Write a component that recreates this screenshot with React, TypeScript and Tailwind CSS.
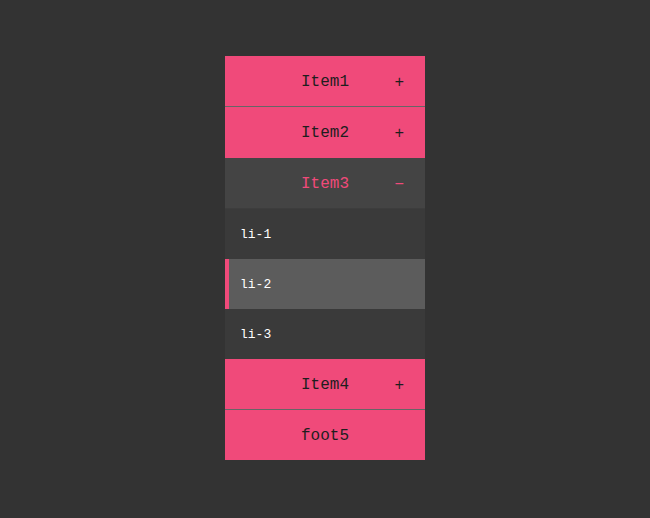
import React, { useState } from "react";

const items = ["Item1", "Item2", "Item3", "Item4"];
const subs = ["li-1", "li-2", "li-3"];

export default function App() {
  const [open, setOpen] = useState("Item3");
  const [active, setActive] = useState("li-2");

  return (
    <div className="min-h-[518px] bg-[#333333] pt-[56px] font-['Liberation_Mono',monospace]">
      <div className="mx-auto w-[200px]">
        {items.map((item, i) => {
          const isOpen = open === item;
          return (
            <div key={item}>
              <button
                onClick={() => setOpen(isOpen ? "" : item)}
                className={`relative box-content flex h-[50px] w-full items-center justify-center border-b text-[16px] ${
                  isOpen
                    ? "border-[#3d3d3d] bg-[#444444] text-[#f04a7a]"
                    : i === 1
                      ? "border-[#f04a7a] bg-[#f04a7a] text-[#1e1e1e]"
                      : "border-[#666666] bg-[#f04a7a] text-[#1e1e1e]"
                }`}
              >
                <span className="pt-[2px]">{item}</span>
                <span className="absolute right-[21px] top-[15px] text-[16px]">
                  {isOpen ? "−" : "+"}
                </span>
              </button>
              {isOpen && (
                <ul>
                  {subs.map((s) => (
                    <li
                      key={s}
                      onClick={() => setActive(s)}
                      className={`flex h-[50px] items-center text-[13px] text-white ${
                        active === s
                          ? "border-l-4 border-[#f04a7a] bg-[#5c5c5c] pl-[11px]"
                          : "bg-[#3a3a3a] pl-[15px]"
                      }`}
                    >
                      <span className="pt-[2px]">{s}</span>
                    </li>
                  ))}
                </ul>
              )}
            </div>
          );
        })}
        <div className="flex h-[50px] items-center justify-center bg-[#f04a7a] pt-[2px] text-[16px] text-[#1e1e1e]">
          foot5
        </div>
      </div>
    </div>
  );
}
